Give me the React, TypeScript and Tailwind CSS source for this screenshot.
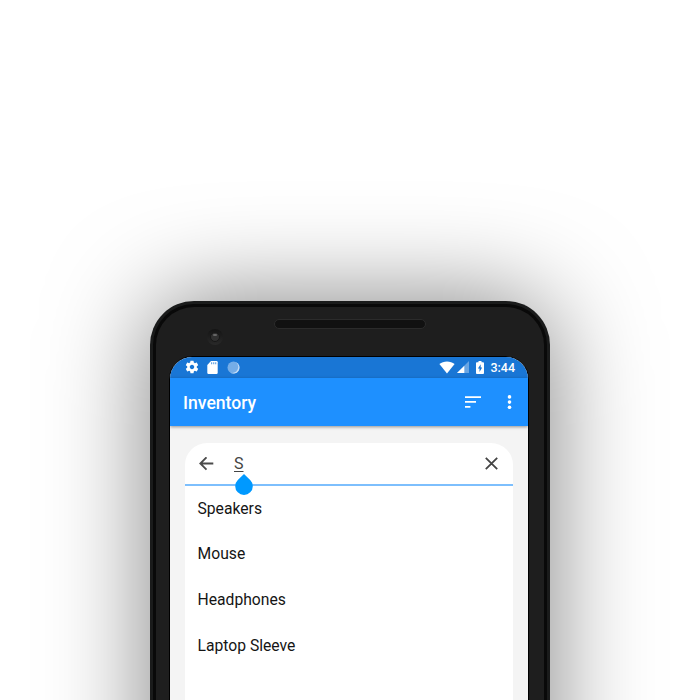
import React from "react";

const items = ["Speakers", "Mouse", "Headphones", "Laptop Sleeve"];

function StatusBar() {
  return (
    <div className="flex h-[21px] shrink-0 items-center bg-[#1976d5] pb-px pl-[15px] pr-[13px] text-white">
      <svg className="size-[14px]" viewBox="1 1 22 22" fill="currentColor">
        <path d="M19.43 12.98c.04-.32.07-.64.07-.98s-.03-.66-.07-.98l2.11-1.65c.19-.15.24-.42.12-.64l-2-3.46c-.12-.22-.39-.3-.61-.22l-2.49 1c-.52-.4-1.08-.73-1.69-.98l-.38-2.65A.488.488 0 0 0 14 2h-4c-.25 0-.46.18-.49.42l-.38 2.65c-.61.25-1.17.59-1.69.98l-2.49-1c-.23-.09-.49 0-.61.22l-2 3.46c-.13.22-.07.49.12.64l2.11 1.65c-.04.32-.07.65-.07.98s.03.66.07.98l-2.11 1.65c-.19.15-.24.42-.12.64l2 3.46c.12.22.39.3.61.22l2.49-1c.52.4 1.08.73 1.69.98l.38 2.65c.03.24.24.42.49.42h4c.25 0 .46-.18.49-.42l.38-2.65c.61-.25 1.17-.59 1.69-.98l2.49 1c.23.09.49 0 .61-.22l2-3.46c.12-.22.07-.49-.12-.64l-2.11-1.65zM12 15.500c-1.930 0-3.500-1.570-3.500-3.500s1.570-3.500 3.500-3.500 3.500 1.570 3.500 3.500-1.570 3.500-3.500 3.500z" />
      </svg>
      <svg className="ml-2 h-[13px] w-[11px]" viewBox="0 0 11 13">
        <path d="M4 0h5.500a1.200 1.200 0 0 1 1.200 1.200v10.600A1.200 1.200 0 0 1 9.500 13h-8a1.200 1.200 0 0 1-1.200-1.200V4z" fill="#fff" />
        <path d="M4 1.300h1.200v1.900H4zM6.100 1.300h1.200v1.900H6.100zM8.100 1.300h1.200v1.900H8.100z" fill="#69a6e3" />
      </svg>
      <svg className="ml-[9px] size-[13px]" viewBox="0 0 13 13">
        <circle cx="6.500" cy="6.500" r="6" fill="#75ade7" />
        <path d="M8.600 1a6 6 0 1 1-6 10.200 5.800 5.800 0 0 0 8-2.800A6 6 0 0 0 8.600 1z" fill="#c4dcf5" />
      </svg>
      <svg className="ml-auto h-[13px] w-[16px]" viewBox="0 0 16 13" fill="currentColor">
        <path d="M8 12.600.4 3.100C2.500 1.400 5.100.5 8 .5s5.500.9 7.600 2.600z" />
      </svg>
      <svg className="ml-[2px] size-3" viewBox="0 0 12 12" fill="currentColor">
        <path d="M12 0v12H0z" opacity=".35" />
        <path d="M7.300 4.700V12H0z" />
      </svg>
      <svg className="ml-[7px] h-[13px] w-2" viewBox="0 0 8 13">
        <path d="M2.500 0h3v1.300h1.600q.9 0 .9.900v9.900q0 .9-.9.900H.9Q0 13 0 12.100V2.200q0-.9.900-.9h1.600z" fill="#fff" />
        <path d="M4.700 3.200 1.900 7.600h1.600V11l2.700-4.600H4.700z" fill="#1976d5" />
      </svg>
      <span className="ml-[6.500px] pt-px text-[12.500px] font-medium leading-5">3:44</span>
    </div>
  );
}

function AppBar() {
  return (
    <div className="z-10 flex h-12 shrink-0 items-center bg-[#1e90ff] pl-[13px] pr-[16px] text-white shadow-[0_1px_3px_rgba(0,0,0,0.4)]">
      <h1 className="pt-0.5 text-[17.600px] font-medium leading-6">Inventory</h1>
      <svg className="ml-auto h-3 w-4" viewBox="0 0 16 12" fill="currentColor">
        <path d="M0 .3h16V2H0zM0 5.100h11v1.700H0zM0 10h5.400v1.700H0z" />
      </svg>
      <svg className="ml-[26px] h-[14px] w-[5px]" viewBox="0 0 5 14" fill="currentColor">
        <circle cx="2.500" cy="1.900" r="1.800" />
        <circle cx="2.500" cy="7.100" r="1.800" />
        <circle cx="2.500" cy="12.300" r="1.800" />
      </svg>
    </div>
  );
}

function SearchCard() {
  return (
    <div className="mx-[15px] mt-[17px] flex grow flex-col rounded-t-[22px] bg-white">
      <div className="relative flex h-[43px] shrink-0 items-center border-b-2 border-[#7dbffd] pl-[14px] pr-[15px]">
        <svg className="h-[14px] w-[15px]" viewBox="0 0 15 14" fill="none" stroke="#4b4b4b" strokeWidth="1.800">
          <path d="M14.300 6.500H1.500M7.500.3 1.300 6.500l6.200 6.200" />
        </svg>
        <span className="ml-[20px] text-[16px] leading-5 text-[#444] underline decoration-1 underline-offset-2">S</span>
        <svg className="ml-auto size-[13px]" viewBox="0 0 13 13" fill="none" stroke="#444" strokeWidth="1.800">
          <path d="m.8.8 11.400 11.400M12.200.8.8 12.200" />
        </svg>
        <svg className="absolute left-[50px] top-[31px] h-[21px] w-[18px]" viewBox="0 0 18 21" fill="#0099ff">
          <path d="M9 0 15.200 5.900a8.800 8.800 0 1 1-12.400 0z" />
        </svg>
      </div>
      <ul className="-mt-[0.400px] flex flex-col">
        {items.map((item) => (
          <li key={item} className="flex h-[45.700px] items-center pl-[12.500px] text-[15.700px] text-[#151515]">
            {item}
          </li>
        ))}
      </ul>
    </div>
  );
}

export default function App() {
  return (
    <div className="flex h-[700px] w-[700px] items-start justify-center overflow-hidden bg-white pt-[301px] font-[Roboto,sans-serif]">
      <div className="h-[820px] w-[400px] shrink-0 rounded-[44px] bg-[#1a1b1b] p-[3px] shadow-[0_0_100px_rgba(0,0,0,0.5)]">
        <div className="h-full rounded-[41px] bg-[#090909] p-[3px]">
          <div className="flex h-full flex-col rounded-[38px] bg-[#1e1e1e] px-[13px]">
            <div className="flex h-[49px] shrink-0 items-start">
              <div className="ml-[38px] mt-[22px] flex size-4 items-center justify-center rounded-full bg-gradient-to-b from-[#141414] to-[#292929]">
                <div className="flex size-[10px] justify-center rounded-full border border-[#171717] bg-[#303030] pt-px">
                  <div className="h-[2px] w-1 rounded-full bg-[#656565]" />
                </div>
              </div>
              <div className="ml-[51px] mt-3 h-[10px] w-[152px] rounded-full border border-[#2b2b2b] bg-[#111]" />
            </div>
            <div className="flex h-[720px] w-[360px] shrink-0 flex-col overflow-hidden rounded-[23px] border border-black bg-[#f4f4f4]">
              <StatusBar />
              <AppBar />
              <SearchCard />
            </div>
          </div>
        </div>
      </div>
    </div>
  );
}
